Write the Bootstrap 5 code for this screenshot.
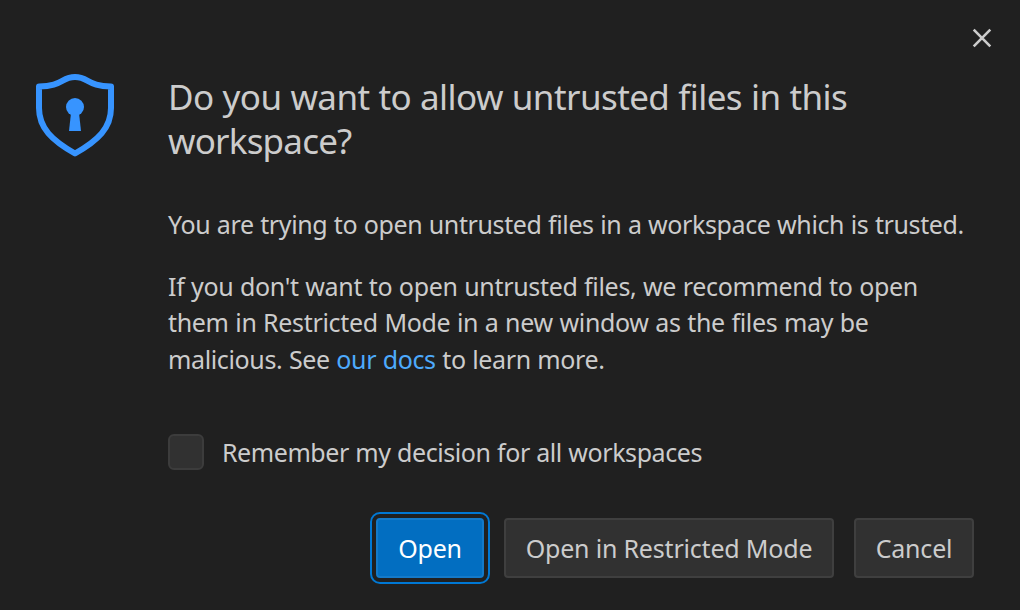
<!DOCTYPE html>
<html lang="en" data-bs-theme="dark">
<head>
<meta charset="utf-8">
<title>Untrusted files</title>
<link href="https://cdn.jsdelivr.net/npm/bootstrap@5.3.0/dist/css/bootstrap.min.css" rel="stylesheet">
<style>
body{background:#202020;color:#ccc;font-family:"Noto Sans",sans-serif;font-size:25px;line-height:36.4px;overflow:hidden}
.dialog-box{width:1020px;height:610px;padding:24px 24px 32px 34px}
.close-btn{width:28px;height:28px;color:#ccc}
.dialog-main{margin-top:22px}
.shield{width:82px;height:86px;margin-top:-1px}
.dialog-text{width:804px;margin-left:52px;padding-top:.6px}
.dialog-title{font-size:35px;line-height:44px;font-weight:400;color:#ccc;margin-bottom:43.4px}
.dialog-text p{margin-bottom:25.6px}
.fit{white-space:nowrap;word-spacing:.4px}
.t1{letter-spacing:-.57px}
.t2{letter-spacing:-.8px}
.b1{letter-spacing:-.38px}
.b2,.b3{letter-spacing:-.32px}
.b4{letter-spacing:-.36px}
.b5{letter-spacing:-.43px}
.docs-link{color:#4daafc}
.form-check-input.trust-check{width:36px;height:36px;margin:0;background-color:#313131;border:2px solid #3c3c3c;border-radius:6px}
.trust-row{margin-top:57px;gap:18px}
.actions{gap:20px;margin-right:22px}
.dlg-btn{height:60px;padding:2px 0 0;border-radius:4px;font-size:25px;letter-spacing:-.19px;border:2px solid #3f3f3f;background:#313131;color:#ccc}
.dlg-primary{background:#026ec1;border-color:#147ac9;color:#fff;outline:2px solid #0078d4;outline-offset:4px}
.w-open{width:108px}.w-restricted{width:330px}.w-cancel{width:120px}
</style>
</head>
<body>
<main class="dialog-box d-flex flex-column" role="dialog" aria-labelledby="title">
  <div class="d-flex justify-content-end">
    <button class="btn close-btn p-0 border-0 d-flex" aria-label="Close">
      <svg width="28" height="28" viewBox="0 0 28 28" fill="none" stroke="currentColor" stroke-width="2.6"><path d="M5.700 5.700 22.300 22.300M22.300 5.700 5.700 22.300"/></svg>
    </button>
  </div>
  <div class="dialog-main d-flex align-items-start">
    <svg class="shield flex-shrink-0" viewBox="0 0 82 86" fill="none"><path d="M41 4C54.500 4 54 13.500 77 13.500V35C77 55 64 67.500 41 80.500C18 67.500 5 55 5 35V13.500C28 13.500 27.500 4 41 4Z" stroke="#3794ff" stroke-width="6" stroke-linejoin="round"/><circle cx="41" cy="34" r="9" fill="#3794ff"/><path d="M37 40H45L47 58H35Z" fill="#3794ff"/></svg>
    <div class="dialog-text">
      <h1 class="dialog-title" id="title"><span class="fit t1">Do you want to allow untrusted files in this</span><br><span class="fit t2">workspace?</span></h1>
      <p><span class="fit b1">You are trying to open untrusted files in a workspace which is trusted.</span></p>
      <p class="mb-0"><span class="fit b2">If you don't want to open untrusted files, we recommend to open</span><br><span class="fit b3">them in Restricted Mode in a new window as the files may be</span><br><span class="fit b4">malicious. See <a href="#" class="docs-link text-decoration-none">our docs</a> to learn more.</span></p>
      <div class="trust-row d-flex align-items-center"><input class="form-check-input trust-check" type="checkbox" id="remember"><label for="remember" class="fit b5">Remember my decision for all workspaces</label></div>
    </div>
  </div>
  <div class="actions d-flex justify-content-end mt-auto">
    <button class="btn dlg-btn dlg-primary w-open">Open</button>
    <button class="btn dlg-btn w-restricted">Open in Restricted Mode</button>
    <button class="btn dlg-btn w-cancel">Cancel</button>
  </div>
</main>
<script src="https://cdn.jsdelivr.net/npm/bootstrap@5.3.0/dist/js/bootstrap.bundle.min.js"></script>
</body>
</html>
